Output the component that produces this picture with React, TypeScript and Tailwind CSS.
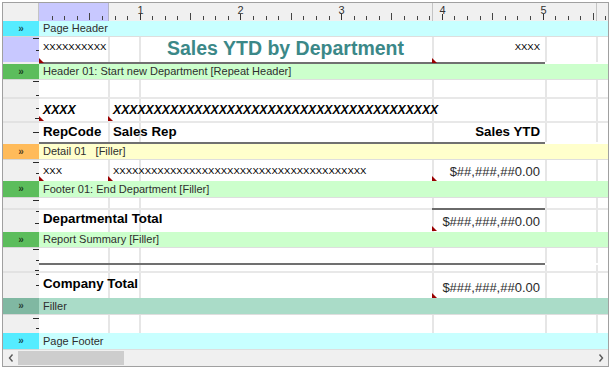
import React from "react";

const GRID = [69, 100, 393, 506, 557];
const X40 = "X".repeat(40);

function GridLines() {
  return (
    <svg className="absolute inset-0 w-full h-full pointer-events-none">
      {GRID.map((x) => (
        <line key={x} x1={x + 1} x2={x + 1} y1={0} y2="100%" stroke="#e6e6e6" strokeWidth={2} />
      ))}
    </svg>
  );
}

function GutterTicks({ ticks }: { ticks: [number, number][] }) {
  return (
    <svg className="absolute inset-0 w-full h-full pointer-events-none">
      {ticks.map(([y, len], i) => (
        <line key={i} x1={36 - len} x2={36} y1={y + 0.5} y2={y + 0.5} stroke="#2a2a2a" strokeWidth={1} />
      ))}
    </svg>
  );
}

function Tri({ className }: { className: string }) {
  return (
    <div
      className={`absolute w-0 h-0 border-l-[5px] border-t-[5px] border-t-transparent border-l-[#9a0000] ${className}`}
    />
  );
}

function WhiteRow({
  hClass,
  gutterClass = "bg-[#f0f0f0]",
  ticks = [],
  children,
}: {
  hClass: string;
  gutterClass?: string;
  ticks?: [number, number][];
  children?: React.ReactNode;
}) {
  return (
    <div className={`flex shrink-0 ${hClass}`}>
      <div className={`relative w-[36px] shrink-0 ${gutterClass}`}>
        <GutterTicks ticks={ticks} />
      </div>
      <div className="relative flex-1 bg-white">
        <GridLines />
        {children}
      </div>
    </div>
  );
}

function Band({
  label,
  hClass,
  gutter,
  bg,
}: {
  label: string;
  hClass: string;
  gutter: string;
  bg: string;
}) {
  return (
    <div className={`flex shrink-0 ${hClass}`}>
      <div className={`w-[36px] shrink-0 flex items-center justify-center border-b border-[#d6d6d6] ${gutter}`}>
        <span className="text-[10px] leading-none font-bold text-black/70">»</span>
      </div>
      <div
        className={`flex-1 flex items-center pl-[4px] text-[11px] text-[#2e2e2e] whitespace-pre border-b border-[#dedede] ${bg}`}
      >
        {label}
      </div>
    </div>
  );
}

function Sep() {
  return (
    <div className="flex shrink-0 h-[2px]">
      <div className="w-[36px] shrink-0 bg-[#e2e2e2]" />
      <div className="flex-1 bg-[#e8e8e8]" />
    </div>
  );
}

function DarkLine() {
  return (
    <div className="flex shrink-0 h-[2px]">
      <div className="w-[36px] shrink-0 bg-[#f0f0f0]" />
      <div className="w-[506px] shrink-0 bg-[#707070]" />
      <div className="flex-1 bg-white" />
    </div>
  );
}

function SepDark() {
  return (
    <div className="flex shrink-0 h-[2px]">
      <div className="w-[36px] shrink-0 bg-[#e2e2e2]" />
      <div className="w-[393px] shrink-0 bg-[#e8e8e8]" />
      <div className="w-[113px] shrink-0 bg-[#6a6a6a]" />
      <div className="flex-1 bg-[#e8e8e8]" />
    </div>
  );
}

function Ruler() {
  const inch = 100.7;
  const step = inch / 8;
  const ticks: React.ReactNode[] = [];
  for (let k = 1; k <= 45; k++) {
    const x = Math.round(k * step) + 0.5;
    if (k % 8 === 0) {
      ticks.push(<line key={k} x1={x} x2={x} y1={11} y2={17} stroke="#333" strokeWidth={1} />);
      ticks.push(
        <text
          key={"t" + k}
          x={x}
          y={11}
          textAnchor="middle"
          fontSize={11}
          fontFamily="Liberation Sans, Arial, sans-serif"
          fill="#333"
        >
          {k / 8}
        </text>
      );
    } else if (k % 4 === 0) {
      ticks.push(<line key={k} x1={x} x2={x} y1={10} y2={17} stroke="#444" strokeWidth={1} />);
    } else {
      ticks.push(<line key={k} x1={x} x2={x} y1={13} y2={17} stroke="#444" strokeWidth={1} />);
    }
  }
  return (
    <div className="flex h-[18px] shrink-0">
      <div className="w-[36px] shrink-0 bg-[#f0f0f0] border-r border-[#c4c4c4]" />
      <div className="relative flex-1 bg-[#f0f0f0]">
        <svg className="absolute inset-0 w-full h-full">
          <rect x={0} y={0} width={69} height={18} fill="#c8c8ff" />
          <line x1={69.5} x2={69.5} y1={0} y2={18} stroke="#b4b4c8" strokeWidth={1} />
          <line x1={393.5} x2={393.5} y1={0} y2={18} stroke="#c4c4c4" strokeWidth={1} />
          <line x1={557.5} x2={557.5} y1={0} y2={18} stroke="#c4c4c4" strokeWidth={1} />
          {ticks}
        </svg>
      </div>
    </div>
  );
}

function Chevron({ dir }: { dir: "l" | "r" }) {
  return (
    <svg width="6" height="8" viewBox="0 0 6 8">
      <polyline
        points={dir === "l" ? "4.5,0.5 1.5,4 4.5,7.5" : "1.5,0.5 4.5,4 1.5,7.5"}
        fill="none"
        stroke="#5a5a5a"
        strokeWidth={1.4}
      />
    </svg>
  );
}

export default function App() {
  const cyanG = "bg-[#55ecff]";
  const cyanB = "bg-[#c8ffff]";
  const greenG = "bg-[#5cbd5c]";
  const greenB = "bg-[#ccffcc]";
  return (
    <div className="w-[611px] h-[369px] bg-white pt-[2px] pl-[2px] font-['Liberation_Sans',Arial,sans-serif]">
      <div className="w-[607px] h-[365px] border border-[#a0a0a0] flex flex-col overflow-hidden bg-white">
        <Ruler />
        <Band label="Page Header" hClass="h-[16px]" gutter={cyanG} bg={cyanB} />
        <WhiteRow hClass="h-[25px]" gutterClass="bg-[#c8c8ff]" ticks={[[1, 6], [13, 3]]}>
          <div className="relative flex h-full">
            <div className="w-[69px] shrink-0 pl-[4px] pt-[5px] text-[9.5px] leading-none text-black">
              XXXXXXXXXX
            </div>
            <div className="w-[31px] shrink-0" />
            <div className="w-[293px] shrink-0 pt-[2px] text-center text-[19.5px] leading-none font-bold text-[#3b8888] whitespace-nowrap">
              Sales YTD by Department
            </div>
            <div className="w-[113px] shrink-0 pr-[5px] pt-[5px] text-right text-[9.5px] leading-none text-black">
              XXXX
            </div>
          </div>
          <Tri className="left-0 bottom-[-1px]" />
          <Tri className="left-[393px] bottom-[-1px]" />
        </WhiteRow>
        <DarkLine />
        <Band label="Header 01: Start new Department [Repeat Header]" hClass="h-[16px]" gutter={greenG} bg={greenB} />
        <WhiteRow hClass="h-[17px]" ticks={[[1, 6], [15, 3]]} />
        <Sep />
        <WhiteRow hClass="h-[22px]" ticks={[[9, 3], [19, 4]]}>
          <div className="relative flex h-full items-center text-[12.2px] leading-none font-bold italic text-black">
            <div className="w-[69px] shrink-0 pl-[4px]">XXXX</div>
            <div className="shrink-0 pl-[5px] whitespace-nowrap">{X40}</div>
          </div>
          <Tri className="left-0 bottom-0" />
          <Tri className="left-[69px] bottom-0" />
        </WhiteRow>
        <Sep />
        <WhiteRow hClass="h-[19px]" ticks={[[9, 6]]}>
          <div className="relative flex h-full pt-[2px] text-[13.3px] leading-none font-bold text-black">
            <div className="w-[69px] shrink-0 pl-[4px]">RepCode</div>
            <div className="w-[324px] shrink-0 pl-[5px]">Sales Rep</div>
            <div className="w-[113px] shrink-0 pr-[5px] text-right">Sales YTD</div>
          </div>
        </WhiteRow>
        <DarkLine />
        <Band label="Detail 01   [Filler]" hClass="h-[16px]" gutter="bg-[#ffbb5a]" bg="bg-[#ffffcc]" />
        <WhiteRow hClass="h-[21px]" ticks={[[2, 6], [13, 3]]}>
          <div className="relative flex h-full text-black">
            <div className="w-[69px] shrink-0 pl-[4px] pt-[6px] text-[9.5px] leading-none">XXX</div>
            <div className="w-[324px] shrink-0 pl-[5px] pt-[6px] text-[9.5px] leading-none whitespace-nowrap">
              {X40}
            </div>
            <div className="w-[113px] shrink-0 pr-[5px] pt-[5px] text-right text-[13px] leading-none text-[#2a2a2a] whitespace-nowrap">
              $##,###,##0.00
            </div>
          </div>
          <Tri className="left-0 bottom-0" />
          <Tri className="left-[69px] bottom-0" />
          <Tri className="left-[393px] bottom-0" />
        </WhiteRow>
        <Band label="Footer 01: End Department [Filler]" hClass="h-[17px]" gutter={greenG} bg={greenB} />
        <WhiteRow hClass="h-[10px]" ticks={[[2, 6]]} />
        <SepDark />
        <WhiteRow hClass="h-[22px]" ticks={[[1, 3], [13, 4]]}>
          <div className="relative flex h-full">
            <div className="w-[393px] shrink-0 pl-[4px] pt-[2px] text-[13.3px] leading-none font-bold text-black whitespace-nowrap">
              Departmental Total
            </div>
            <div className="w-[113px] shrink-0 pr-[5px] pt-[5px] text-right text-[13px] leading-none text-[#2a2a2a] whitespace-nowrap">
              $###,###,##0.00
            </div>
          </div>
          <Tri className="left-[393px] bottom-[1px]" />
        </WhiteRow>
        <Band label="Report Summary [Filler]" hClass="h-[16px]" gutter={greenG} bg={greenB} />
        <WhiteRow hClass="h-[15px]" ticks={[[1, 6], [12, 3]]} />
        <DarkLine />
        <WhiteRow hClass="h-[6px]" ticks={[[5, 4]]} />
        <Sep />
        <WhiteRow hClass="h-[25px]" ticks={[[1, 3], [12, 3]]}>
          <div className="relative flex h-full">
            <div className="w-[393px] shrink-0 pl-[4px] pt-[4px] text-[13.3px] leading-none font-bold text-black whitespace-nowrap">
              Company Total
            </div>
            <div className="w-[113px] shrink-0 pr-[5px] pt-[8px] text-right text-[13px] leading-none text-[#2a2a2a] whitespace-nowrap">
              $###,###,##0.00
            </div>
          </div>
          <Tri className="left-[393px] bottom-0" />
        </WhiteRow>
        <Band label="Filler" hClass="h-[17px]" gutter="bg-[#80b8a2]" bg="bg-[#aadcc8]" />
        <WhiteRow hClass="h-[18px]" ticks={[[3, 6], [13, 3]]} />
        <Band label="Page Footer" hClass="h-[17px]" gutter={cyanG} bg={cyanB} />
        <div className="flex h-[16px] shrink-0 items-center bg-[#f0f0f0]">
          <div className="w-[15px] shrink-0 flex justify-center">
            <Chevron dir="l" />
          </div>
          <div className="w-[106px] h-[14px] shrink-0 bg-[#cdcdcd]" />
          <div className="flex-1" />
          <div className="w-[15px] shrink-0 flex justify-center">
            <Chevron dir="r" />
          </div>
        </div>
      </div>
    </div>
  );
}
